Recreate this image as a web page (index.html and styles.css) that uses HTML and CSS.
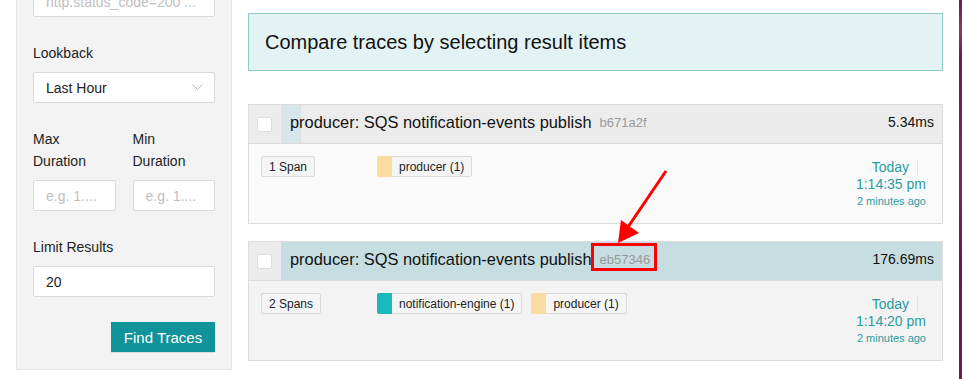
FILE: index.html
```html
<!DOCTYPE html>
<html lang="en">
<head>
  <meta charset="UTF-8" />
  <title>Search Traces</title>
  <link rel="stylesheet" href="styles.css">
</head>
<body>

  <div class="page">
    <aside class="sidebar">
      <div class="field">
        <input class="text-input" type="text" placeholder="http.status_code=200 ...">
      </div>
      <div class="field">
        <label>Lookback</label>
        <div class="select">
          <span>Last Hour</span>
          <svg width="11" height="7" viewBox="0 0 11 7"><path d="M0.5 0.5 L5.5 5.5 L10.5 0.5" fill="none" stroke="#bbb" stroke-width="1"/></svg>
        </div>
      </div>
      <div class="field-row">
        <div class="field">
          <label>Max<br>Duration</label>
          <input class="text-input" type="text" placeholder="e.g. 1....">
        </div>
        <div class="field">
          <label>Min<br>Duration</label>
          <input class="text-input" type="text" placeholder="e.g. 1....">
        </div>
      </div>
      <div class="field">
        <label>Limit Results</label>
        <input class="text-input" type="text" value="20">
      </div>
      <div class="actions">
        <button class="btn-find">Find Traces</button>
      </div>
    </aside>

    <main class="results">
      <div class="info">Compare traces by selecting result items</div>

      <div class="result">
        <div class="result-head">
          <div class="check-col"><span class="checkbox"></span></div>
          <div class="title-col" style="--pct: 3%">
            <span class="trace-name">producer: SQS notification-events publish</span>
            <span class="trace-id">b671a2f</span>
            <span class="duration">5.34ms</span>
          </div>
        </div>
        <div class="result-body">
          <div class="span-col"><span class="tag">1 Span</span></div>
          <div class="services">
            <span class="tag service"><i class="swatch yellow"></i>producer (1)</span>
          </div>
          <div class="time">
            <div><span class="day">Today</span></div>
            <div class="clock">1:14:35 pm</div>
            <div class="ago">2 minutes ago</div>
          </div>
        </div>
      </div>

      <div class="result hover">
        <div class="result-head">
          <div class="check-col"><span class="checkbox"></span></div>
          <div class="title-col" style="--pct: 100%">
            <span class="trace-name">producer: SQS notification-events publish</span>
            <span class="trace-id marked">eb57346</span>
            <span class="duration">176.69ms</span>
          </div>
        </div>
        <div class="result-body">
          <div class="span-col"><span class="tag">2 Spans</span></div>
          <div class="services">
            <span class="tag service"><i class="swatch teal"></i>notification-engine (1)</span>
            <span class="tag service"><i class="swatch yellow"></i>producer (1)</span>
          </div>
          <div class="time">
            <div><span class="day">Today</span></div>
            <div class="clock">1:14:20 pm</div>
            <div class="ago">2 minutes ago</div>
          </div>
        </div>
      </div>
    </main>
  </div>
  <div class="edge"></div>

  <!-- annotation arrow -->
  <svg class="arrow" width="962" height="379" viewBox="0 0 962 379">
    <line x1="666" y1="171" x2="628" y2="227" stroke="#f00" stroke-width="3"/>
    <polygon points="621,220 639,233 618,243" fill="#f00"/>
  </svg>

</body>
</html>
```

FILE: styles.css
```css
* {
  margin: 0;
  padding: 0;
  box-sizing: border-box;
}
body {
  font-family: "Liberation Sans", Arial, sans-serif;
  color: #222;
  background: #fff;
  display: flex;
  height: 379px;
  overflow: hidden;
  position: relative;
}
.page {
  width: 959px;
  display: flex;
  align-items: flex-start;
  gap: 16px;
  padding: 0 16px;
}
.edge {
  width: 3px;
  height: 379px;
  background: linear-gradient(to bottom, #6d1c4c 0%, #8c3a68 8%, #6d1c4c 15%, #7a2a5a 45%, #6a1a4a 70%, #6d1c4c 100%);
}

/* sidebar */
.sidebar {
  width: 216px;
  margin-top: -31px;
  background: #f3f3f3;
  border: 1px solid #e2e2e2;
  padding: 16px 16px 16px;
}
.field {
  margin-bottom: 25px;
}
.field label {
  display: block;
  font-size: 14px;
  line-height: 22px;
  color: #222;
  margin-bottom: 8px;
}
.text-input, .select {
  display: block;
  width: 100%;
  height: 31px;
  border: 1px solid #d9d9d9;
  border-radius: 2px;
  background: #fff;
  font-family: inherit;
  font-size: 14px;
  color: #222;
  padding: 0 12px;
  outline: none;
}
.text-input::placeholder {
  color: #c0c0c0;
}
.select {
  display: flex;
  align-items: center;
  justify-content: space-between;
  padding-right: 11px;
}
.field-row {
  display: grid;
  grid-template-columns: 1fr 1fr;
  gap: 17px;
}
.actions {
  display: flex;
  justify-content: flex-end;
}
.btn-find {
  width: 104px;
  height: 31px;
  border: none;
  border-bottom: 1px solid #d7dede;
  background: #11939a;
  color: #fff;
  font-family: inherit;
  font-size: 15px;
  cursor: pointer;
}

/* results */
.results {
  width: 695px;
  padding-top: 13px;
}
.info {
  height: 58px;
  background: #e3f2f2;
  border: 1px solid #8dcbc7;
  font-size: 20px;
  line-height: 56px;
  padding-left: 16px;
  color: #111;
  margin-bottom: 33px;
}
.result {
  border: 1px solid #dcdcdc;
  margin-bottom: 17px;
}
.result-head {
  display: flex;
  height: 39px;
  border-bottom: 1px solid #dcdcdc;
  background: #ececec;
}
.check-col {
  width: 32px;
  display: flex;
  align-items: center;
  padding-left: 8px;
}
.checkbox {
  width: 15px;
  height: 15px;
  background: #fff;
  border: 1px solid #dedede;
  border-radius: 2px;
}
.title-col {
  flex: 1;
  display: flex;
  align-items: center;
  padding: 0 8px 4px 9px;
  background: linear-gradient(to right, #d6e6ea var(--pct), #ececec var(--pct));
}
.hover .title-col {
  background: linear-gradient(to right, #c6dde1 var(--pct), #ececec var(--pct));
}
.trace-name {
  font-size: 16.4px;
  color: #111;
}
.trace-id {
  font-size: 13px;
  color: #999;
  margin-left: 8px;
  position: relative;
}
.trace-id.marked::after {
  content: "";
  position: absolute;
  left: -9px;
  right: -7px;
  top: -9px;
  bottom: -4px;
  border: 3px solid #f00;
}
.duration {
  margin-left: auto;
  font-size: 14px;
  color: #111;
}
.result-body {
  display: flex;
  height: 79px;
  background: #fafafa;
  padding: 12px 16px 0 12px;
}
.hover .result-body {
  background: #f3f3f3;
}
.span-col {
  width: 116px;
}
.services {
  flex: 1;
  display: flex;
  align-items: flex-start;
  gap: 9px;
}
.tag {
  display: inline-flex;
  align-items: center;
  height: 21px;
  border: 1px solid #dadada;
  border-radius: 2px;
  background: #f5f5f5;
  font-size: 12px;
  color: #222;
  padding: 0 7px;
}
.tag.service {
  padding-left: 0;
}
.swatch {
  width: 15px;
  height: 21px;
  margin: -1px 7px -1px -1px;
  border-radius: 2px 0 0 2px;
}
.swatch.yellow {
  background: #f8dca0;
}
.swatch.teal {
  background: #17b9bf;
}
.time {
  text-align: right;
  color: #2a9ca2;
  font-size: 14px;
  line-height: 17px;
  padding-top: 3px;
}
.day {
  display: inline-block;
  padding-right: 8px;
  margin-right: 8px;
  border-right: 1px solid #e2e2e2;
  line-height: 15px;
}
.ago {
  font-size: 11px;
  line-height: 16px;
}
.arrow {
  position: absolute;
  left: 0;
  top: 0;
  pointer-events: none;
}
```
